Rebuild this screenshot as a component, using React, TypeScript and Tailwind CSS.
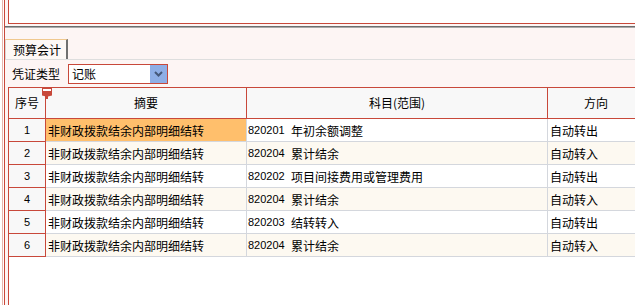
import React from "react";

const rows = [
  ["1", "820201", "年初余额调整", "自动转出"],
  ["2", "820204", "累计结余", "自动转入"],
  ["3", "820202", "项目间接费用或管理费用", "自动转出"],
  ["4", "820204", "累计结余", "自动转入"],
  ["5", "820203", "结转转入", "自动转出"],
  ["6", "820204", "累计结余", "自动转入"],
];

const App: React.FC = () => {
  return (
    <div className="w-[635px] h-[305px] overflow-hidden bg-white pl-[2px] text-[12px] leading-none text-black font-['Noto_Sans_CJK_SC','Liberation_Sans',sans-serif]">
      <div className="h-full border-l border-[#e8b6ad] pl-px bg-white">
        <div className="h-full border-l border-[#c8483a] bg-[#fdf5f4] flex flex-col">
          {/* top white box */}
          <div className="ml-[3px] h-[24px] shrink-0 bg-white border-l border-b border-[#c8483a]" />
          <div className="h-[2px] shrink-0" />
          <div className="h-px shrink-0 bg-[#6e6e6e]" />
          <div className="h-px shrink-0 bg-[#a9a9a9]" />

          {/* tabs */}
          <div className="mt-[11px] h-[21px] shrink-0 flex border-b border-[#dedede]">
            <div className="h-[20px] flex items-center pl-[7px] pr-[5px] bg-[#fdf8f6] border-l border-[#d8d8d8] border-t border-t-[#f0c88e] border-r-2 border-r-[#707070]">
              预算会计
            </div>
          </div>

          {/* voucher type */}
          <div className="mt-[4px] h-[20px] shrink-0 flex items-center">
            <span className="ml-[7px] w-[48px]">凭证类型</span>
            <div className="ml-[8px] w-[100px] h-[20px] flex items-center bg-white border border-[#c8483a]">
              <span className="pl-[3px] flex-1">记账</span>
              <div className="w-[17px] h-full flex items-center justify-center bg-[#8eaee6]">
                <svg width="9" height="6" viewBox="0 0 9 6">
                  <path d="M1 1L4.5 4.5L8 1" fill="none" stroke="#45587a" strokeWidth="2" />
                </svg>
              </div>
            </div>
          </div>

          {/* grid */}
          <div className="mt-[3px] ml-[3px] flex-1 bg-white border-l border-[#c8483a]">
            <div className="relative flex h-[32px] bg-[#f8f8f8] border-y border-[#c8483a]">
              <div className="w-[37px] shrink-0 flex items-center justify-center border-r border-[#c8483a]">
                序号
              </div>
              <div className="w-[201px] shrink-0 flex items-center justify-center border-r border-[#c8483a]">
                摘要
              </div>
              <div className="w-[301px] shrink-0 flex items-center justify-center border-r border-[#c8483a]">
                科目(范围)
              </div>
              <div className="w-[96px] shrink-0 flex items-center justify-center">方向</div>
              <svg className="absolute left-[33px] top-0" width="10" height="11" viewBox="0 0 10 11">
                <rect x="0.5" y="0.5" width="9" height="3" fill="#fff" stroke="#c8483a" />
                <path d="M0 3H10V7.5L6 8.5V11H4V8.5L0 7.5Z" fill="#c8483a" />
              </svg>
            </div>
            {rows.map((r, i) => (
              <div
                key={i}
                className={`flex h-[23px] ${i % 2 === 1 ? "bg-[#fdf9f1]" : "bg-white"}`}
              >
                <div className="w-[37px] shrink-0 flex items-center justify-center pt-px bg-[#f8f8f8] border-r border-b border-[#c8483a] text-[11px] font-['Liberation_Sans',sans-serif]">
                  {r[0]}
                </div>
                <div
                  className={`w-[201px] shrink-0 flex items-center pl-[2px] pt-px border-r border-b border-[#d4d7dd] ${
                    i === 0 ? "bg-[#ffbf6c]" : ""
                  }`}
                >
                  非财政拨款结余内部明细结转
                </div>
                <div className="w-[301px] shrink-0 flex items-center pl-px pt-px border-r border-b border-[#d4d7dd]">
                  <span className="w-[43px] text-[11px] font-['Liberation_Sans',sans-serif]">{r[1]}</span>
                  <span>{r[2]}</span>
                </div>
                <div className="w-[96px] shrink-0 flex items-center pl-[2px] pt-px border-b border-[#d4d7dd]">
                  {r[3]}
                </div>
              </div>
            ))}
          </div>
        </div>
      </div>
    </div>
  );
};

export default App;
